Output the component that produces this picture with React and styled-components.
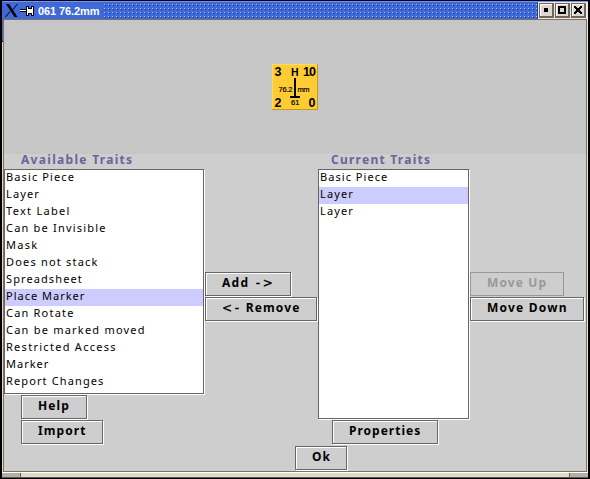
import React from "react";
import styled, { createGlobalStyle, css } from "styled-components";

const Global = createGlobalStyle`
  * { box-sizing: border-box; }
  body { margin: 0; background: #000; overflow: hidden; }
`;

const Frame = styled.div`
  width: 590px;
  height: 479px;
  padding: 1px;
  background: #000;
  display: flex;
  flex-direction: column;
  font-family: "Noto Sans", "Open Sans", sans-serif;
  font-size: 12px;
  color: #000;
  cursor: default;
`;
const TitleBar = styled.div`
  height: 18px;
  flex: none;
  display: flex;
  background: #3f68d9;
  border-top: 1px solid #6f93f2;
  margin: 0 1px 0 1px;
`;
const TitleIcons = styled.svg`
  width: 35px;
  height: 17px;
  flex: none;
`;
const Title = styled.div`
  width: 66px;
  padding-left: 1px;
  font: bold 11px/18px "Liberation Sans", Arial, sans-serif;
  letter-spacing: ${(p) => p.$spacing}px;
  color: #fff;
  white-space: nowrap;
`;
const Grip = styled.svg`
  flex: 1;
  min-width: 0;
  height: 17px;
`;
const Controls = styled.div`
  width: 51px;
  flex: none;
  display: flex;
  gap: 1px;
  padding: 1px 1px 0 1px;
  background: #f2e9dc;
  border-left: 1px solid #223c87;
`;
const Control = styled.svg`
  width: 15px;
  height: 15px;
  flex: none;
`;
const Body = styled.div`
  height: 453px;
  flex: none;
  display: flex;
  margin: 0 1px;
  padding: 0 1px;
  background: linear-gradient(#3f68d9 0 22px, #000 22px 23px, #e6d9c4 23px) left / 1px 100% no-repeat, #efe6d6;
`;
const Client = styled.div`
  flex: 1;
  background: #cecece;
  border: 1px solid #7b7262;
  display: flex;
  flex-direction: column;
`;
const Preview = styled.div`
  height: 134px;
  flex: none;
  background: #c6c6c6;
  display: flex;
  justify-content: center;
  padding: 44px 0 0 0;
`;
const Piece = styled.svg`
  width: 46px;
  height: 46px;
  font-family: "Liberation Sans", Arial, sans-serif;
`;
const Traits = styled.div`
  display: grid;
  grid-template-columns: 201px 113px 152px 1fr;
  height: 291px;
  flex: none;
`;
const Column = styled.div`
  display: flex;
  flex-direction: column;
  align-items: flex-start;
`;
const Heading = styled.div`
  height: 15px;
  margin-left: ${(p) => p.$indent}px;
  font-size: 12px;
  font-weight: 700;
  line-height: 11px;
  letter-spacing: ${(p) => p.$spacing}px;
  white-space: nowrap;
  color: #666699;
`;
const sunken = css`
  border: 1px solid #666;
  box-shadow: 1px 1px 0 #fff, inset 1px 1px 0 #fff;
`;
const List = styled.div`
  ${sunken}
  width: ${(p) => p.$width}px;
  height: ${(p) => p.$height}px;
  margin-bottom: 1px;
  background: #fff;
`;
const Row = styled.div`
  height: 17px;
  padding-left: 1px;
  font-size: 11px;
  line-height: 14px;
  letter-spacing: ${(p) => p.$spacing}px;
  white-space: nowrap;
  background: ${(p) => (p.$selected ? "#ccccff" : "transparent")};
`;
const Button = styled.button`
  ${sunken}
  width: ${(p) => p.$width}px;
  height: 24px;
  flex: none;
  margin: 0 1px 1px ${(p) => p.$indent || 0}px;
  padding: 0 0 3px 16px;
  background: #cecece;
  font: 700 12px/18px "Noto Sans", "Open Sans", sans-serif;
  letter-spacing: ${(p) => p.$spacing ?? 1.1}px;
  text-align: left;
  white-space: nowrap;
  color: #000;
  &:disabled {
    color: #999;
    border-color: #999;
    box-shadow: none;
  }
`;
const Arrow = styled.span`
  font: 400 12px/1 "DejaVu Sans", sans-serif;
  letter-spacing: 2.6px;
  margin-left: ${(p) => p.$gap || 0}px;
  -webkit-text-stroke: 0.3px #000;
`;
const Actions = styled(Column)`
  padding-top: 118px;
`;
const Footer = styled.div`
  display: flex;
  height: 25px;
  margin-top: 1px;
  padding-left: 291px;
`;
const BottomEdge = styled.div`
  height: 6px;
  flex: none;
  margin: 0 1px;
  display: flex;
  justify-content: space-between;
  background: #e0d9c6;
  border-top: 1px solid #fff;
  border-bottom: 1px solid #5f584c;
`;
const Corner = styled.div`
  width: 19px;
  background: #b5aea4;
  border: solid #6b6458;
  border-width: ${(p) => (p.$right ? "0 0 0 1px" : "0 1px 0 0")};
`;

const available = [
  ["Basic Piece", 1.12],
  ["Layer", 1.15],
  ["Text Label", 1.3],
  ["Can be Invisible", 1.2],
  ["Mask", 1.3],
  ["Does not stack", 1.2],
  ["Spreadsheet", 1.1],
  ["Place Marker", 1],
  ["Can Rotate", 1.2],
  ["Can be marked moved", 1.22],
  ["Restricted Access", 1.28],
  ["Marker", 1],
  ["Report Changes", 1.12],
];
const current = [["Basic Piece", 1.05], ["Layer", 1.15], ["Layer", 1.15]];

function TraitList({ items, selected, width, height }) {
  return (
    <List $width={width} $height={height}>
      {items.map(([name, spacing], i) => (
        <Row key={i} $selected={i === selected} $spacing={spacing}>{name}</Row>
      ))}
    </List>
  );
}

function WindowControl({ kind }) {
  return (
    <Control viewBox="0 0 15 15" shapeRendering="crispEdges">
      <rect width="15" height="15" fill="#6e675b" />
      <rect x="1" y="1" width="12" height="12" fill="#fff" />
      <rect x="2" y="2" width="11" height="11" fill="#ddd8d0" />
      {kind === "min" && <rect x="5" y="5" width="4" height="4" />}
      {kind === "max" && <rect x="4" y="4" width="6" height="6" fill="none" stroke="#000" strokeWidth="2" />}
      {kind === "close" && (
        <path d="M3 3h2v1h1v1h2V4h1V3h2v2h-1v1H9v2h1v1h1v2H9v-1H8V9H6v1H5v1H3V9h1V8h1V6H4V5H3z" />
      )}
    </Control>
  );
}

export default function App() {
  return (
    <>
      <Global />
      <Frame>
        <TitleBar>
          <TitleIcons viewBox="0 0 35 17">
            <path d="M4 2h3l8.5 13h-3z" fill="#000" />
            <path d="M15.5 2L10.5 8M8 9.5L3.5 15" stroke="#000" strokeWidth="1" />
            <g shapeRendering="crispEdges">
              <path d="M18 7h6V4h3v2h2V4h3v10h-3v-2h-2v2h-3v-4h-6z" fill="#000" />
              <path d="M18 8h6v1h-6zM25 5h1v2h4V5h1v8h-1v-2h-4v2h-1z" fill="#fff" />
            </g>
          </TitleIcons>
          <Title $spacing={-0.1}>061 76.2mm</Title>
          <Grip shapeRendering="crispEdges">
            <defs>
              <pattern id="dots" width="4" height="4" patternUnits="userSpaceOnUse">
                <rect x="1" y="2" width="1" height="1" fill="#a9c0ff" />
                <rect x="2" y="3" width="1" height="1" fill="#1d3993" />
              </pattern>
            </defs>
            <rect width="100%" height="16" fill="url(#dots)" />
          </Grip>
          <Controls>
            <WindowControl kind="min" />
            <WindowControl kind="max" />
            <WindowControl kind="close" />
          </Controls>
        </TitleBar>
        <Body>
          <Client>
            <Preview>
              <Piece viewBox="0 0 46 46">
                <rect width="46" height="46" fill="#c89922" />
                <rect width="45" height="45" fill="#ffda62" />
                <rect x="1" y="1" width="44" height="44" fill="#ffcc33" />
                <g fontWeight="bold" fontSize="12.5">
                  <text x="2.5" y="12">3</text>
                  <text x="19" y="11.5" fontSize="10.5">H</text>
                  <text x="31" y="12" textLength="13">10</text>
                  <text x="2.5" y="43">2</text>
                  <text x="36.5" y="43">0</text>
                </g>
                <g fontSize="7.5" stroke="#000" strokeWidth=".2">
                  <text x="6.5" y="28" textLength="14">76.2</text>
                  <text x="25.5" y="28" textLength="12">mm</text>
                  <text x="19" y="41" textLength="8.5">61</text>
                </g>
                <path d="M22 14h2v18h4v2H18v-2h4z" shapeRendering="crispEdges" />
              </Piece>
            </Preview>
            <Traits>
              <Column>
                <Heading $indent={17} $spacing={1.3}>Available Traits</Heading>
                <TraitList items={available} selected={7} width={200} height={225} />
                <Button $width={66} $indent={17}>Help</Button>
                <Button $width={82} $indent={17}>Import</Button>
              </Column>
              <Actions>
                <Button $width={86} $spacing={1.3}>Add <Arrow $gap={2}>-&gt;</Arrow></Button>
                <Button $width={112} $spacing={1.1}><Arrow>&lt;-</Arrow> Remove</Button>
              </Actions>
              <Column>
                <Heading $indent={13} $spacing={1.25}>Current Traits</Heading>
                <TraitList items={current} selected={1} width={151} height={250} />
                <Button $width={106} $indent={14} $spacing={1}>Properties</Button>
              </Column>
              <Actions>
                <Button $width={94} disabled>Move Up</Button>
                <Button $width={114} $spacing={1.2}>Move Down</Button>
              </Actions>
            </Traits>
            <Footer>
              <Button $width={52}>Ok</Button>
            </Footer>
          </Client>
        </Body>
        <BottomEdge>
          <Corner />
          <Corner $right />
        </BottomEdge>
      </Frame>
    </>
  );
}
